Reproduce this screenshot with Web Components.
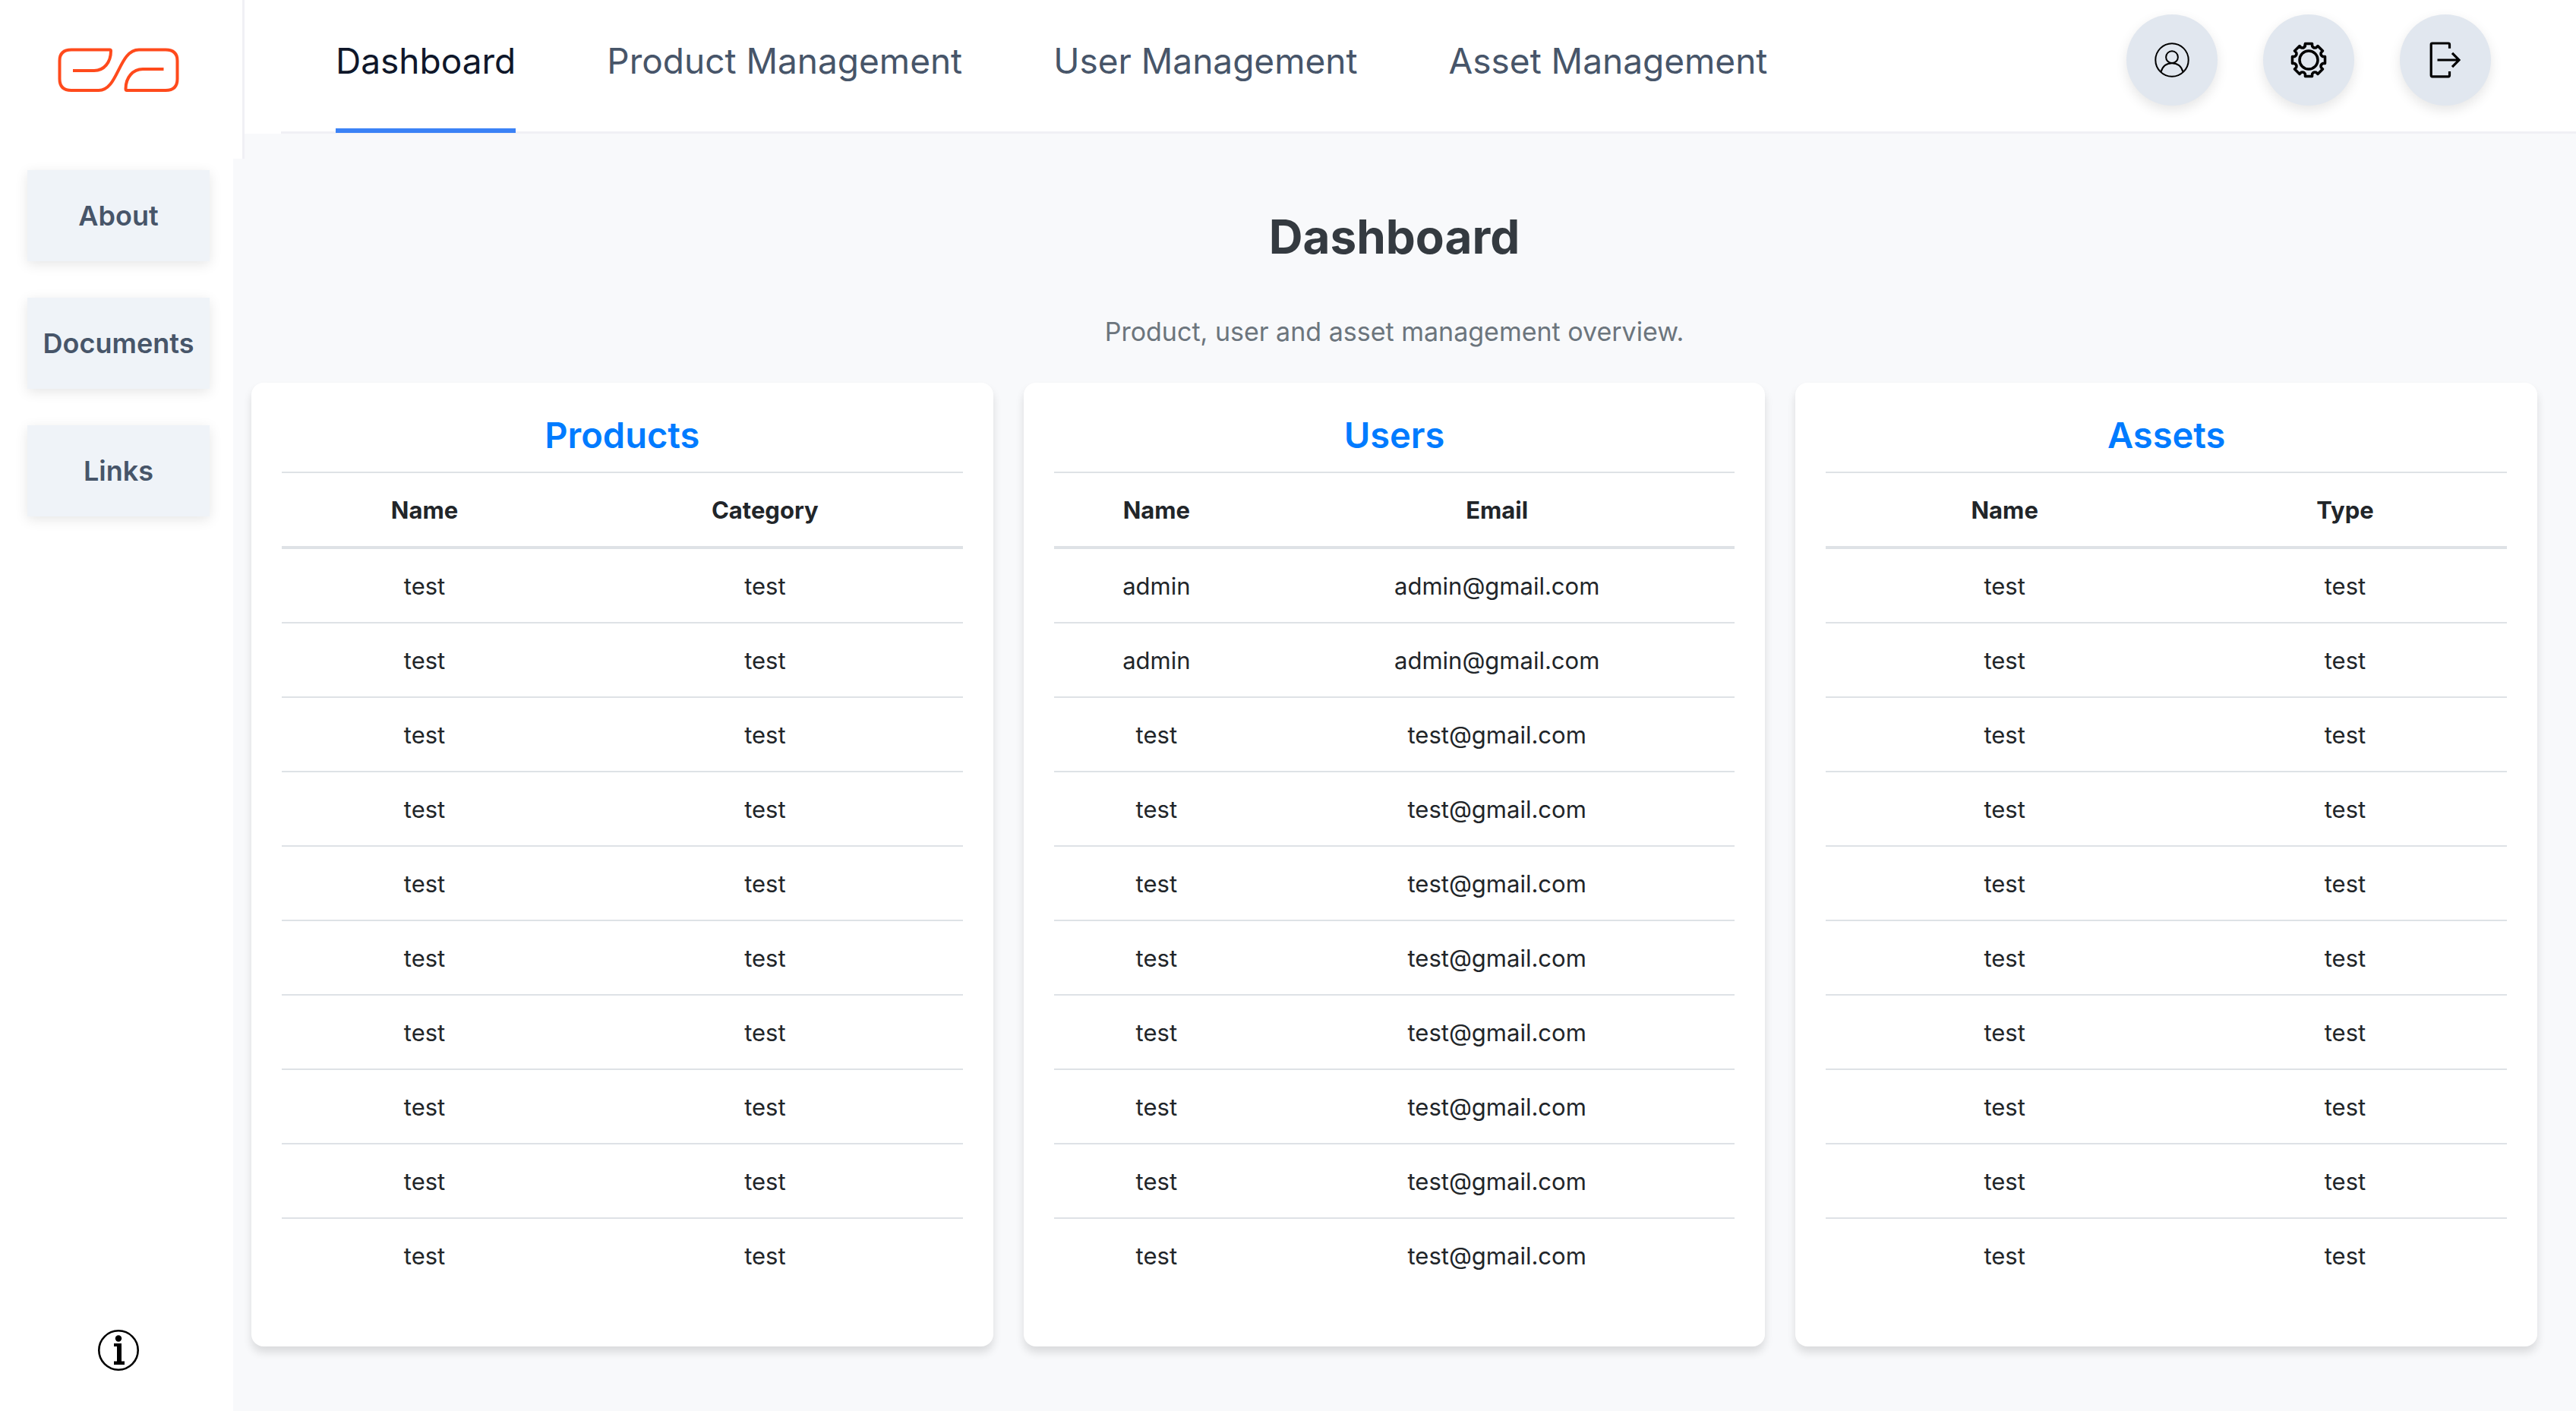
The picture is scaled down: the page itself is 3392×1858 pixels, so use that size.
<!DOCTYPE html>
<html lang="en">
<head>
<meta charset="utf-8">
<title>Dashboard</title>
<style>
  html, body { margin: 0; height: 100%; }
  body { font-family: Inter, "Liberation Sans", sans-serif; background: #f8f9fb; color: #212529; }
</style>
</head>
<body>
<app-shell>
  <side-bar slot="side">
    <side-button>About</side-button>
    <side-button>Documents</side-button>
    <side-button>Links</side-button>
  </side-bar>
  <top-bar slot="top">
    <nav-link current>Dashboard</nav-link>
    <nav-link>Product Management</nav-link>
    <nav-link>User Management</nav-link>
    <nav-link>Asset Management</nav-link>
    <icon-button slot="actions" label="Profile"><svg viewBox="0 0 48 48" width="48" height="48" fill="none" stroke="#000" stroke-width="2"><circle cx="24" cy="24" r="21.7"/><circle cx="24" cy="20.200" r="7.900"/><path d="M9.500 39.800C11.500 32.500 17 28.300 24 28.300S36.500 32.500 38.500 39.800"/></svg></icon-button>
    <icon-button slot="actions" label="Settings"><svg viewBox="0 0 48 48" width="48" height="48" fill="none" stroke="#000" stroke-width="3.500" stroke-linejoin="round"><circle cx="24" cy="24" r="12"/><path id="gear"/></svg></icon-button>
    <icon-button slot="actions" label="Log out"><svg viewBox="0 0 48 48" width="48" height="48" fill="none" stroke="#000" stroke-width="3.200"><path d="M29.500 8.700V3.500Q29.500 2 28 2H6.700Q5.200 2 5.200 3.500V44.300Q5.200 45.800 6.700 45.800H28Q29.500 45.800 29.500 44.300V39M13.500 24H42M33 14.800 42 24 33 33.200"/></svg></icon-button>
  </top-bar>
  <overview-panel heading="Dashboard" summary="Product, user and asset management overview.">
    <data-card heading="Products" columns="Name,Category" rows="test,test*10"></data-card>
    <data-card heading="Users" columns="Name,Email" rows="admin,admin@gmail.com*2;test,test@gmail.com*8"></data-card>
    <data-card heading="Assets" columns="Name,Type" rows="test,test*10"></data-card>
  </overview-panel>
</app-shell>
<script>
const define = (name, html, setup) => customElements.define(name, class extends HTMLElement {
  connectedCallback() {
    if (this.shadowRoot) return;
    this.attachShadow({ mode: "open" }).innerHTML = html;
    if (setup) setup(this, this.shadowRoot);
  }
});

define("app-shell", `<style>
  :host { display: grid; grid-template-columns: 307px minmax(0, 1fr); grid-template-rows: auto 1fr; min-height: 100vh; }
  .side { grid-row: 1 / 3; display: flex; z-index: 1; }
</style><div class="side"><slot name="side"></slot></div><div class="top"><slot name="top"></slot></div><slot></slot>`);

define("side-bar", `<style>
  :host { display: flex; flex-direction: column; width: 100%; background: #fff; }
  .logo { box-sizing: border-box; height: 209px; margin-right: -15px; border-right: 3px solid #f0f0f5; background: #fff; padding: 62px 0 0 76px; }
  svg { display: block; }
  nav { display: flex; flex-direction: column; gap: 48px; padding: 15px 31px 0 36px; }
  .info { margin-top: auto; padding: 0 0 53px 129px; }
  .info a { display: block; width: 54px; }
</style>
<div class="logo"><svg width="160" height="60" viewBox="0 0 160 60" fill="none" stroke="#ff4a1c" stroke-width="4"><path d="M20 31H48C61 31 70 20 70 5Q70 3.500 68.500 3.500H18Q2.500 3.500 2.500 18V42Q2.500 57 18 57H54C80 57 80 3.500 107 3.500H142Q157.500 3.500 157.500 18V42Q157.500 57 142 57H91Q89.500 57 89.500 55C89.500 40 99 29 112 29H139.500"/></svg></div>
<nav><slot></slot></nav>
<div class="info"><a href="#info" aria-label="Information"><svg width="54" height="54" viewBox="0 0 54 54"><circle cx="27" cy="27" r="25.700" fill="none" stroke="#000" stroke-width="2.600"/><circle cx="27" cy="11.500" r="4.200"/><path d="M21 18H31V41.500H35V46H21V41.500H25V22H21Z"/></svg></a></div>`);

define("side-button", `<style>
  :host { display: block; }
  button { display: block; width: 100%; height: 120px; padding: 0; border: 0; border-radius: 0; background: #eff3f8; color: #475569;
    font: 600 36px/48px Inter, "Liberation Sans", sans-serif; white-space: nowrap; box-shadow: 0 4px 16px rgba(0,0,0,.1); }
</style><button type="button"><slot></slot></button>`);

define("top-bar", `<style>
  :host { display: flex; height: 176px; background: #fff; padding-left: 63px; }
  .bar { flex: 1; box-sizing: border-box; display: flex; justify-content: space-between; border-bottom: 3px solid #f0f0f5; padding: 0 112px 0 72px; }
  nav { display: flex; gap: 120px; }
  .actions { display: flex; gap: 60px; padding-top: 19px; }
</style><div class="bar"><nav><slot></slot></nav><div class="actions"><slot name="actions"></slot></div></div>`);

define("nav-link", `<style>
  :host { display: flex; }
  a { box-sizing: border-box; height: 175px; padding-top: 44px; font-size: 46px; line-height: 72px; color: #475569; text-decoration: none; white-space: nowrap; border-bottom: 6px solid transparent; }
  :host([current]) a { color: #0f172a; border-color: #3b82f6; }
</style><a href="#"><slot></slot></a>`);

define("icon-button", `<style>
  :host { display: block; }
  button { display: flex; align-items: center; justify-content: center; width: 120px; height: 120px; padding: 0; border: 0; border-radius: 50%; background: #e1e7ef; box-shadow: 0 6px 16px rgba(0,0,0,.1); }
</style><button type="button"><slot></slot></button>`, (el, root) => {
  root.querySelector("button").setAttribute("aria-label", el.getAttribute("label"));
});

define("overview-panel", `<style>
  :host { display: block; padding: 96px 51px 85px 24px; text-align: center; }
  h1 { margin: 0; font-size: 62px; line-height: 80px; font-weight: 700; color: #343a40; }
  p { margin: 58px 0 40px; font-size: 34px; line-height: 54px; color: #6c757d; }
  .cards { display: grid; grid-template-columns: repeat(3, minmax(0, 1fr)); gap: 40px; }
</style><h1></h1><p></p><div class="cards"><slot></slot></div>`, (el, root) => {
  root.querySelector("h1").textContent = el.getAttribute("heading");
  root.querySelector("p").textContent = el.getAttribute("summary");
});

define("data-card", `<style>
  :host { display: block; box-sizing: border-box; padding: 40px 40px 72px; border-radius: 16px; background: #fff; box-shadow: 0 8px 12px rgba(0,0,0,.12); }
  h2 { margin: 0 0 20px; font-size: 47px; line-height: 57px; font-weight: 600; color: #007bff; }
  table { width: 100%; border-collapse: separate; border-spacing: 0; font-size: 31px; line-height: 48px; color: #212529; }
  th, td { padding: 25px 24px 23px; text-align: center; border-top: 2px solid #dee2e6; }
  th { font-weight: 700; border-bottom: 4px solid #dee2e6; }
  tbody tr:first-child td { border-top: 0; }
</style><h2></h2><table><thead><tr></tr></thead><tbody></tbody></table>`, (el, root) => {
  root.querySelector("h2").textContent = el.getAttribute("heading");
  const cell = (tag, text) => { const c = document.createElement(tag); c.textContent = text; return c; };
  root.querySelector("thead tr").append(...el.getAttribute("columns").split(",").map(t => cell("th", t)));
  for (const group of el.getAttribute("rows").split(";")) {
    const [values, count] = group.split("*");
    for (let i = 0; i < +count; i++) {
      const tr = document.createElement("tr");
      tr.append(...values.split(",").map(t => cell("td", t)));
      root.querySelector("tbody").append(tr);
    }
  }
});

// Eight-toothed gear outline with rounded valleys
const polar = (deg, r) => {
  const t = deg * Math.PI / 180;
  return (24 + r * Math.cos(t)).toFixed(2) + " " + (24 + r * Math.sin(t)).toFixed(2);
};
let d = "M" + polar(-106, 19);
for (let i = 0; i < 8; i++) {
  const a = i * 45 - 90;
  d += "L" + polar(a - 12, 22) + "L" + polar(a + 12, 22) + "L" + polar(a + 14, 19) + "Q" + polar(a + 22.5, 16.5) + " " + polar(a + 31, 19);
}
document.getElementById("gear").setAttribute("d", d + "Z");
</script>
</body>
</html>
